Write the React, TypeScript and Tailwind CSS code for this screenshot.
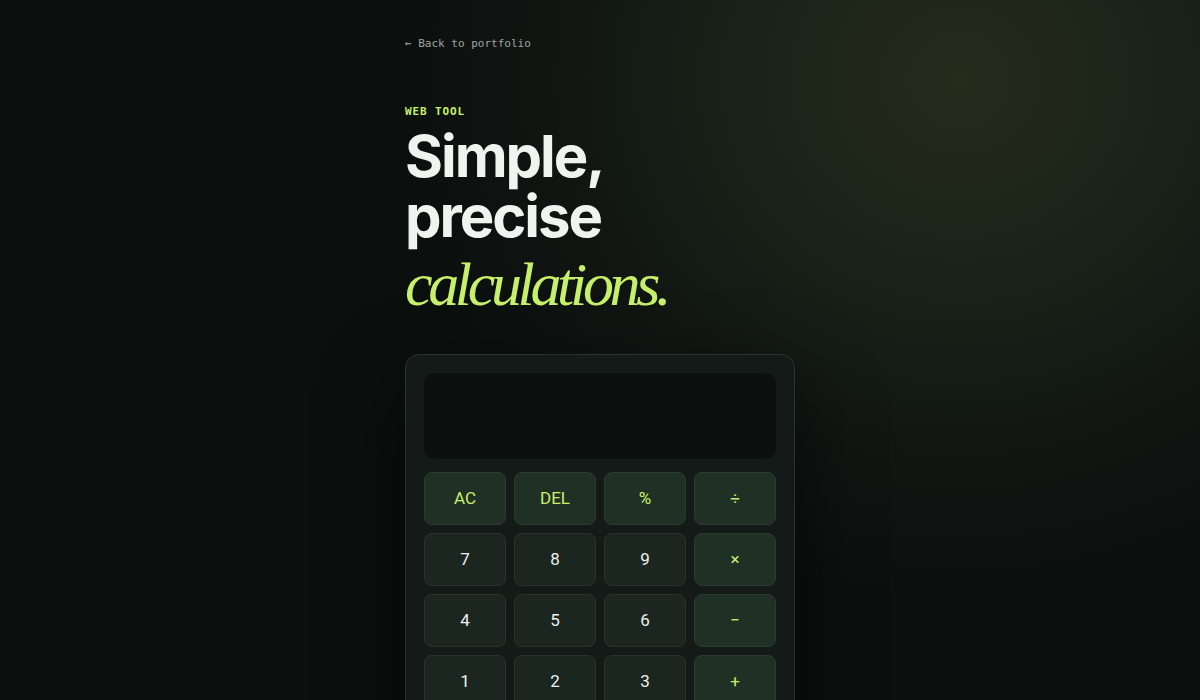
import React from "react";

const keys: { label: string; kind: "fn" | "num" | "op" }[] = [
  { label: "AC", kind: "fn" },
  { label: "DEL", kind: "fn" },
  { label: "%", kind: "fn" },
  { label: "÷", kind: "op" },
  { label: "7", kind: "num" },
  { label: "8", kind: "num" },
  { label: "9", kind: "num" },
  { label: "×", kind: "op" },
  { label: "4", kind: "num" },
  { label: "5", kind: "num" },
  { label: "6", kind: "num" },
  { label: "−", kind: "op" },
  { label: "1", kind: "num" },
  { label: "2", kind: "num" },
  { label: "3", kind: "num" },
  { label: "+", kind: "op" },
  { label: "0", kind: "num" },
  { label: ".", kind: "num" },
  { label: "±", kind: "fn" },
  { label: "=", kind: "op" },
];

export default function App() {
  return (
    <div className="relative min-h-[700px] w-full overflow-hidden bg-[#0b0f0e]">
      <div className="pointer-events-none absolute inset-0 bg-[radial-gradient(ellipse_560px_520px_at_960px_80px,#252c1c_0%,#1a2218_40%,#111613_70%,rgba(11,15,14,0)_100%)]" />
      <div className="relative mx-auto w-[390px] pt-[37px]">
        <a className="block text-[11px] leading-[14px] text-[#a0a6a2] font-['DejaVu_Sans_Mono',monospace]">
          ← Back to portfolio
        </a>
        <div className="mt-[54px] text-[11px] leading-[14px] font-bold tracking-[0.08em] text-[#c6f06a] font-['DejaVu_Sans_Mono',monospace]">
          WEB TOOL
        </div>
        <h1 className="mt-[7px] font-['Inter',sans-serif] font-bold text-[58px] leading-[60px] tracking-[-0.035em] text-[#f1f3ee]">
          <span className="block">Simple,</span>
          <span className="block">precise</span>
          <span className="block font-['Liberation_Serif',serif] italic font-normal text-[62px] leading-[77px] tracking-[-0.07em] text-[#c6f06a]">
            calculations.
          </span>
        </h1>
        <div className="mt-[31px] rounded-[14px] border border-[#2a332e] bg-[#141a17] p-[18px] shadow-[0_30px_80px_rgba(0,0,0,0.55)]">
          <div className="h-[86px] rounded-[10px] bg-[#0c100e]" />
          <div className="mt-[13px] grid grid-cols-4 gap-[8px]">
            {keys.map((k) => (
              <div
                key={k.label}
                className={
                  k.kind === "num"
                    ? "flex h-[53px] items-center justify-center rounded-[8px] border border-[#2a342e] bg-[#1c2620] text-[17px] font-normal text-[#eef0ec] font-['Roboto',sans-serif]"
                    : "flex h-[53px] items-center justify-center rounded-[8px] border border-[#2d3a30] bg-[#213024] text-[17px] font-normal text-[#c6f06a] font-['Roboto',sans-serif]"
                }
              >
                {k.label}
              </div>
            ))}
          </div>
        </div>
      </div>
    </div>
  );
}
